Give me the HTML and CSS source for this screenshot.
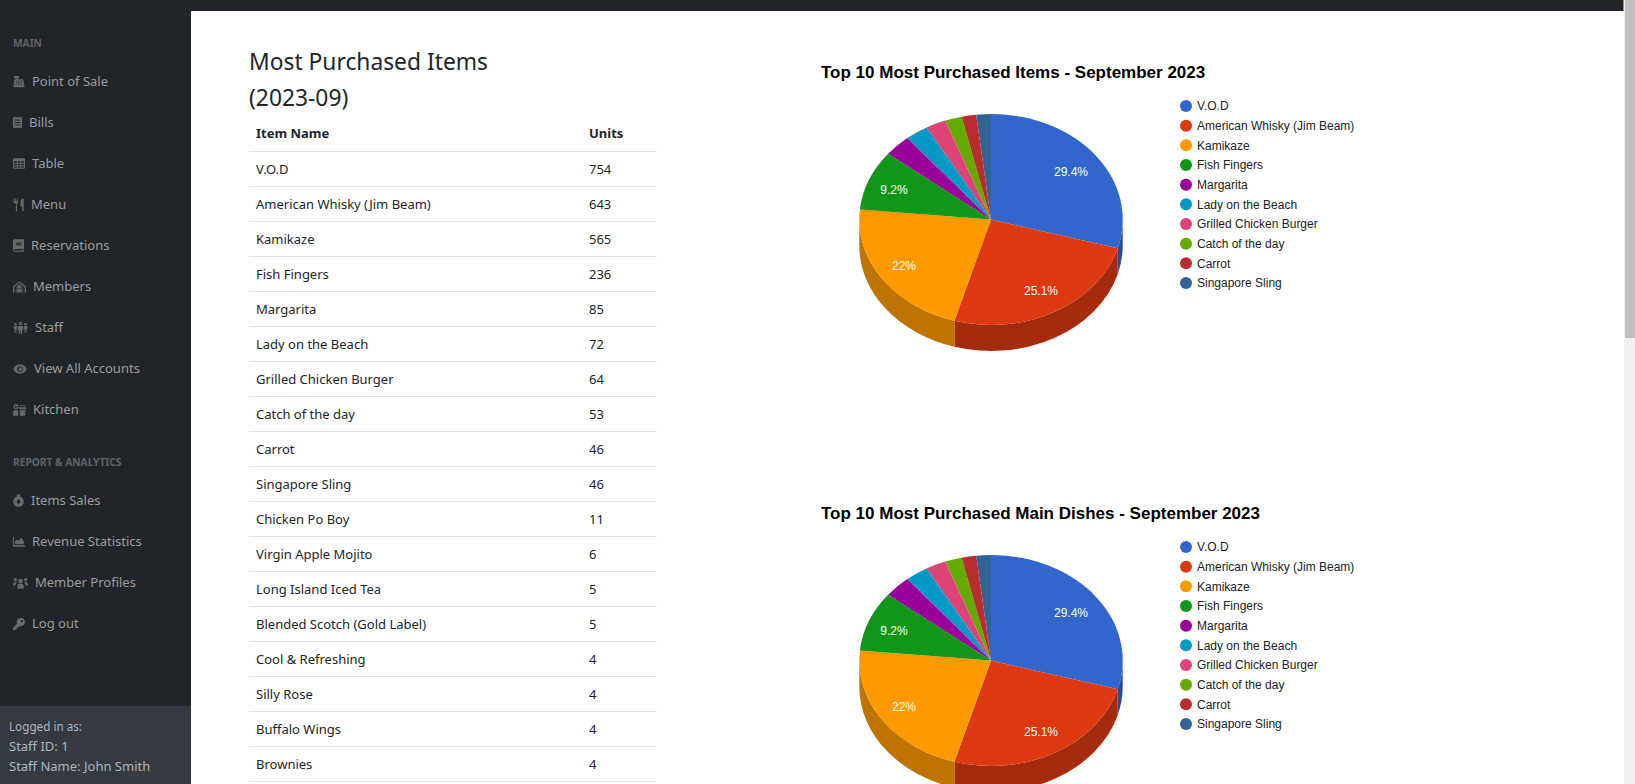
FILE: index.html
```html
<!DOCTYPE html>
<html lang="en">
<head>
    <meta charset="UTF-8">
    <title>Most Purchased Items</title>
    <link rel="stylesheet" href="styles.css">
</head>
<body>
    <!-- shared drawings -->
    <svg class="sprite" xmlns="http://www.w3.org/2000/svg">
        <symbol id="i-register" viewBox="0 0 512 512"><path fill-rule="evenodd" d="M56 24h184a16 16 0 0 1 16 16v72a16 16 0 0 1-16 16h-64v32h224a40 40 0 0 1 40 34l32 176v16H24v-16l32-176a40 40 0 0 1 40-34h32v-32H56a16 16 0 0 1-16-16V40a16 16 0 0 1 16-16zM136 216v40h48v-40zM232 216v40h48v-40zM328 216v40h48v-40zM136 288v40h48v-40zM232 288v40h48v-40zM328 288v40h48v-40z"/><path d="M24 392h464v64a40 40 0 0 1-40 40H64a40 40 0 0 1-40-40z"/></symbol>
        <symbol id="i-receipt" viewBox="0 0 384 512"><path fill-rule="evenodd" d="M0 8l48 32L96 8l48 32 48-32 48 32 48-32 48 32 48-32v496l-48-32-48 32-48-32-48 32-48-32-48 32-48-32-48 32zM72 128v44h240v-44zM72 234v44h240v-44zM72 340v44h240v-44z"/></symbol>
        <symbol id="i-table" viewBox="0 0 512 448"><path fill-rule="evenodd" d="M48 0h416a48 48 0 0 1 48 48v352a48 48 0 0 1-48 48H48a48 48 0 0 1-48-48V48A48 48 0 0 1 48 0zM48 112v84h112v-84zM200 112v84h112v-84zM352 112v84h112v-84zM48 236v76h112v-76zM200 236v76h112v-76zM352 236v76h112v-76zM48 352v50h112v-50zM200 352v50h112v-50zM352 352v50h112v-50z"/></symbol>
        <symbol id="i-utensils" viewBox="0 0 416 512"><path d="M16 16h28l8 120h20l8-120h32l8 120h20l8-120h28l16 150c2 30-20 54-48 62l12 268a28 28 0 0 1-56 0l12-268C44 220 20 196 0 166zM416 16v480a32 32 0 0 1-64 0V336h-64V120C288 60 340 16 416 16z"/></symbol>
        <symbol id="i-book" viewBox="0 0 448 512"><path fill-rule="evenodd" d="M72 0h352a24 24 0 0 1 24 24v344a24 24 0 0 1-18 23v57a24 24 0 0 1 18 24v16a24 24 0 0 1-24 24H72a72 72 0 0 1-72-72V72A72 72 0 0 1 72 0zM72 400a32 32 0 0 0 0 64h316v-64zM112 130v40h240v-40zM112 210v40h240v-40z"/></symbol>
        <symbol id="i-house" viewBox="0 0 576 512"><path fill-rule="evenodd" d="M288 0l272 210a20 20 0 0 1 16 20v260a22 22 0 0 1-22 22h-16a22 22 0 0 1-22-22V252L288 62 60 252v238a22 22 0 0 1-22 22H22a22 22 0 0 1-22-22V230a20 20 0 0 1 16-20z"/><path d="M288 100l170 140v272H118V240z" opacity=".45"/><circle cx="288" cy="240" r="70"/><path d="M170 470c0-80 54-124 118-124s118 44 118 124z"/></symbol>
        <symbol id="i-people" viewBox="0 0 640 512"><circle cx="320" cy="72" r="68"/><circle cx="104" cy="96" r="58"/><circle cx="536" cy="96" r="58"/><path d="M248 166h144a48 48 0 0 1 48 48v100l-48 60v112a28 28 0 0 1-56 0v-96h-32v96a28 28 0 0 1-56 0V374l-48-60V214a48 48 0 0 1 48-48zM44 170h122v130l-20 40v130h-30V370h-16v100H70V344L24 272v-66a36 36 0 0 1 20-36zM474 170h122a36 36 0 0 1 20 36v66l-46 72v126h-30V370h-16v100h-30V340l-20-40z"/></symbol>
        <symbol id="i-eye" viewBox="0 0 576 512"><path fill-rule="evenodd" d="M288 56c126 0 236 82 288 200-52 118-162 200-288 200S52 374 0 256C52 138 162 56 288 56zM288 136a120 120 0 1 0 0 240 120 120 0 0 0 0-240z"/><path d="M288 170a86 86 0 1 1-86 86c0-8 1-14 3-20a44 44 0 0 0 63-64c6-2 13-2 20-2z"/></symbol>
        <symbol id="i-kitchen" viewBox="0 0 576 512"><path fill-rule="evenodd" d="M128 0a112 112 0 1 1 0 224 112 112 0 0 1 0-224zM128 64a48 48 0 1 0 0 96 48 48 0 0 0 0-96z"/><path d="M300 50h260a16 16 0 0 1 0 32H300a16 16 0 0 1 0-32zM270 136h290a16 16 0 0 1 16 16v52a16 16 0 0 1-16 16H270zM16 272h224v24h-24v16a16 16 0 0 1 16 16v152a32 32 0 0 1-32 32H40a32 32 0 0 1-32-32V328a16 16 0 0 1 16-16v-16H16zM300 272h276v40h-36v168a32 32 0 0 1-32 32H336a32 32 0 0 1-32-32V312h-4z"/></symbol>
        <symbol id="i-fire" viewBox="0 0 448 512"><path d="M224 80a216 216 0 1 1 0 432 216 216 0 0 1 0-432z"/><path d="M150 8h148v90H150z"/><path d="M224 210c40 40 70 70 70 110a70 70 0 0 1-140 0c0-40 30-70 70-110z" fill="#212529"/></symbol>
        <symbol id="i-area" viewBox="0 0 512 448"><path d="M0 24h44v362h468v44a18 18 0 0 1-18 18H24a24 24 0 0 1-24-24z"/><path d="M84 344V216c0-8 4-14 10-18l84-48 60 40 100-108c10-8 24-6 30 4l96 134v124z"/></symbol>
        <symbol id="i-users" viewBox="0 0 640 512"><circle cx="320" cy="170" r="96"/><circle cx="100" cy="116" r="70"/><circle cx="540" cy="116" r="70"/><path d="M186 464v-60c0-80 50-130 110-130h48c60 0 110 50 110 130v60a32 32 0 0 1-32 32H218a32 32 0 0 1-32-32zM0 330c0-70 30-120 80-120h50c14 0 30 4 42 12-44 32-68 82-72 140H24a24 24 0 0 1-24-24zM640 330c0-70-30-120-80-120h-50c-14 0-30 4-42 12 44 32 68 82 72 140h76a24 24 0 0 0 24-24z"/></symbol>
        <symbol id="i-key" viewBox="0 0 512 512"><path fill-rule="evenodd" d="M336 0a176 176 0 1 1-50 345l-45 50h-49v56h-56v45a16 16 0 0 1-16 16H16a16 16 0 0 1-16-16v-72a24 24 0 0 1 7-17l165-165A176 176 0 0 1 336 0zM376 88a48 48 0 1 0 0 96 48 48 0 0 0 0-96z"/></symbol>

        <symbol id="pie-top10" viewBox="-140 -110 280 250" overflow="visible">
            <path fill="#264d99" d="M131.7 0v26A131.7 105.5 0 0 1 126.7 54.8V28.8A131.7 105.5 0 0 0 131.7 0z"/>
            <path fill="#a52b0e" d="M126.7 28.8v26A131.7 105.5 0 0 1 -36.6 127.3V101.3A131.7 105.5 0 0 0 126.7 28.8z"/>
            <path fill="#bf7300" d="M-36.6 101.3v26A131.7 105.5 0 0 1 -131.7 26V0A131.7 105.5 0 0 0 -36.6 101.3z"/>
            <path fill="#3366cc" d="M0 0V-105.5A131.7 105.5 0 0 1 126.7 28.8z"/>
            <path fill="#dc3912" d="M0 0L126.7 28.8A131.7 105.5 0 0 1 -36.6 101.3z"/>
            <path fill="#ff9900" d="M0 0L-36.6 101.3A131.7 105.5 0 0 1 -131.1 -10.1z"/>
            <path fill="#109618" d="M0 0L-131.1 -10.1A131.7 105.5 0 0 1 -102.9 -65.8z"/>
            <path fill="#990099" d="M0 0L-102.9 -65.8A131.7 105.5 0 0 1 -83.7 -81.5z"/>
            <path fill="#0099c6" d="M0 0L-83.7 -81.5A131.7 105.5 0 0 1 -64.5 -92z"/>
            <path fill="#dd4477" d="M0 0L-64.5 -92A131.7 105.5 0 0 1 -45.8 -98.9z"/>
            <path fill="#66aa00" d="M0 0L-45.8 -98.9A131.7 105.5 0 0 1 -29.4 -102.8z"/>
            <path fill="#b82e2e" d="M0 0L-29.4 -102.8A131.7 105.5 0 0 1 -14.8 -104.8z"/>
            <path fill="#316395" d="M0 0L-14.8 -104.8A131.7 105.5 0 0 1 0 -105.5z"/>
        </symbol>
    </svg>

    <div class="layout">
        <aside class="sidenav">
            <nav class="sidenav-menu">
                <div class="nav-heading">Main</div>
                <a class="nav-link" href="#"><svg width="12" height="13"><use href="#i-register"/></svg>Point of Sale</a>
                <a class="nav-link" href="#"><svg width="9" height="13"><use href="#i-receipt"/></svg>Bills</a>
                <a class="nav-link" href="#"><svg width="12" height="11"><use href="#i-table"/></svg>Table</a>
                <a class="nav-link" href="#"><svg width="11" height="13"><use href="#i-utensils"/></svg>Menu</a>
                <a class="nav-link" href="#"><svg width="11" height="13"><use href="#i-book"/></svg>Reservations</a>
                <a class="nav-link" href="#"><svg width="13" height="12"><use href="#i-house"/></svg>Members</a>
                <a class="nav-link" href="#"><svg width="15" height="12"><use href="#i-people"/></svg>Staff</a>
                <a class="nav-link" href="#"><svg width="14" height="12"><use href="#i-eye"/></svg>View All Accounts</a>
                <a class="nav-link" href="#"><svg width="13" height="12"><use href="#i-kitchen"/></svg>Kitchen</a>
                <div class="nav-heading">Report &amp; Analytics</div>
                <a class="nav-link" href="#"><svg width="11" height="13"><use href="#i-fire"/></svg>Items Sales</a>
                <a class="nav-link" href="#"><svg width="12" height="11"><use href="#i-area"/></svg>Revenue Statistics</a>
                <a class="nav-link" href="#"><svg width="15" height="12"><use href="#i-users"/></svg>Member Profiles</a>
                <a class="nav-link" href="#"><svg width="12" height="12"><use href="#i-key"/></svg>Log out</a>
            </nav>
            <div class="sidenav-footer">
                <div class="small">Logged in as:</div>
                <div>Staff ID: 1</div>
                <div>Staff Name: John Smith</div>
            </div>
        </aside>

        <div class="page">
            <div class="topbar"></div>
            <main class="content">
                <section class="items">
                    <h4>Most Purchased Items<br>(2023-09)</h4>
                    <table class="items-table">
                        <thead>
                            <tr><th>Item Name</th><th>Units</th></tr>
                        </thead>
                        <tbody>
                            <tr><td>V.O.D</td><td>754</td></tr>
                            <tr><td>American Whisky (Jim Beam)</td><td>643</td></tr>
                            <tr><td>Kamikaze</td><td>565</td></tr>
                            <tr><td>Fish Fingers</td><td>236</td></tr>
                            <tr><td>Margarita</td><td>85</td></tr>
                            <tr><td>Lady on the Beach</td><td>72</td></tr>
                            <tr><td>Grilled Chicken Burger</td><td>64</td></tr>
                            <tr><td>Catch of the day</td><td>53</td></tr>
                            <tr><td>Carrot</td><td>46</td></tr>
                            <tr><td>Singapore Sling</td><td>46</td></tr>
                            <tr><td>Chicken Po Boy</td><td>11</td></tr>
                            <tr><td>Virgin Apple Mojito</td><td>6</td></tr>
                            <tr><td>Long Island Iced Tea</td><td>5</td></tr>
                            <tr><td>Blended Scotch (Gold Label)</td><td>5</td></tr>
                            <tr><td>Cool &amp; Refreshing</td><td>4</td></tr>
                            <tr><td>Silly Rose</td><td>4</td></tr>
                            <tr><td>Buffalo Wings</td><td>4</td></tr>
                            <tr><td>Brownies</td><td>4</td></tr>
                        </tbody>
                    </table>
                </section>

                <section class="charts">
                    <svg class="chart" width="600" height="441">
                        <text class="chart-title" x="0" y="28">Top 10 Most Purchased Items - September 2023</text>
                        <use href="#pie-top10" x="30" y="59.5" width="280" height="250"/>
                        <text class="pie-label" x="250" y="126">29.4%</text>
                        <text class="pie-label" x="220" y="245">25.1%</text>
                        <text class="pie-label" x="83" y="220">22%</text>
                        <text class="pie-label" x="73" y="144">9.2%</text>
                        <g class="legend">
                            <circle cx="365" cy="56" r="6" fill="#3366cc"/><text x="376" y="60.2">V.O.D</text>
                            <circle cx="365" cy="75.7" r="6" fill="#dc3912"/><text x="376" y="79.9">American Whisky (Jim Beam)</text>
                            <circle cx="365" cy="95.3" r="6" fill="#ff9900"/><text x="376" y="99.5">Kamikaze</text>
                            <circle cx="365" cy="115" r="6" fill="#109618"/><text x="376" y="119.2">Fish Fingers</text>
                            <circle cx="365" cy="134.7" r="6" fill="#990099"/><text x="376" y="138.9">Margarita</text>
                            <circle cx="365" cy="154.3" r="6" fill="#0099c6"/><text x="376" y="158.5">Lady on the Beach</text>
                            <circle cx="365" cy="174" r="6" fill="#dd4477"/><text x="376" y="178.2">Grilled Chicken Burger</text>
                            <circle cx="365" cy="193.7" r="6" fill="#66aa00"/><text x="376" y="197.9">Catch of the day</text>
                            <circle cx="365" cy="213.3" r="6" fill="#b82e2e"/><text x="376" y="217.5">Carrot</text>
                            <circle cx="365" cy="233" r="6" fill="#316395"/><text x="376" y="237.2">Singapore Sling</text>
                        </g>
                    </svg>
                    <svg class="chart" width="600" height="441">
                        <text class="chart-title" x="0" y="28">Top 10 Most Purchased Main Dishes - September 2023</text>
                        <use href="#pie-top10" x="30" y="59.5" width="280" height="250"/>
                        <text class="pie-label" x="250" y="126">29.4%</text>
                        <text class="pie-label" x="220" y="245">25.1%</text>
                        <text class="pie-label" x="83" y="220">22%</text>
                        <text class="pie-label" x="73" y="144">9.2%</text>
                        <g class="legend">
                            <circle cx="365" cy="56" r="6" fill="#3366cc"/><text x="376" y="60.2">V.O.D</text>
                            <circle cx="365" cy="75.7" r="6" fill="#dc3912"/><text x="376" y="79.9">American Whisky (Jim Beam)</text>
                            <circle cx="365" cy="95.3" r="6" fill="#ff9900"/><text x="376" y="99.5">Kamikaze</text>
                            <circle cx="365" cy="115" r="6" fill="#109618"/><text x="376" y="119.2">Fish Fingers</text>
                            <circle cx="365" cy="134.7" r="6" fill="#990099"/><text x="376" y="138.9">Margarita</text>
                            <circle cx="365" cy="154.3" r="6" fill="#0099c6"/><text x="376" y="158.5">Lady on the Beach</text>
                            <circle cx="365" cy="174" r="6" fill="#dd4477"/><text x="376" y="178.2">Grilled Chicken Burger</text>
                            <circle cx="365" cy="193.7" r="6" fill="#66aa00"/><text x="376" y="197.9">Catch of the day</text>
                            <circle cx="365" cy="213.3" r="6" fill="#b82e2e"/><text x="376" y="217.5">Carrot</text>
                            <circle cx="365" cy="233" r="6" fill="#316395"/><text x="376" y="237.2">Singapore Sling</text>
                        </g>
                    </svg>
                </section>
            </main>
        </div>

        <div class="scrollbar"><div class="scrollbar-thumb"></div></div>
    </div>
</body>
</html>
```

FILE: styles.css
```css
html, body { height: 100%; margin: 0; overflow: hidden; }
body { font-family: "Noto Sans", "Open Sans", sans-serif; font-size: 13px; line-height: 21px; color: #212529; background: #fff; }
.sprite { display: none; }

.layout { display: flex; height: 784px; }

/* sidebar */
.sidenav { width: 191px; flex: none; display: flex; flex-direction: column; background: #212529; }
.sidenav-menu { flex: 1; padding-top: 11px; }
.nav-heading { padding: 23px 13px 9px; font-size: 10.2px; line-height: 18px; font-weight: 700; text-transform: uppercase; color: #5f6366; }
.nav-link { display: flex; align-items: center; gap: 7px; height: 41px; padding-left: 13px; color: #9a9c9e; text-decoration: none; }
.nav-link svg { flex: none; fill: #66696c; }
.sidenav-footer { height: 78px; box-sizing: border-box; padding: 11px 9px 0; background: #343a40; color: #adb5bd; line-height: 20px; }
.sidenav-footer .small { font-size: 11.7px; line-height: 19px; }

/* main area */
.page { flex: 1; min-width: 0; display: flex; flex-direction: column; }
.topbar { height: 11px; flex: none; background: #212529; border-right: 1px solid #8a8d90; }
.content { flex: 1; min-height: 0; overflow: hidden; display: flex; padding: 33px 0 0 58px; }

.items { width: 408px; flex: none; }
.items h4 { margin: 0; font-size: 22.8px; line-height: 36px; font-weight: 400; }
.items-table { width: 100%; border-collapse: collapse; }
.items-table tr { height: 35px; }
.items-table th, .items-table td { padding: 1px 7px 0; text-align: left; border-bottom: 1px solid #dee2e6; }
.items-table th { font-weight: 700; }
.items-table th:first-child, .items-table td:first-child { width: 319px; }

/* charts */
.charts { margin: 6px 0 0 164px; display: flex; flex-direction: column; }
.chart { display: block; flex: none; font-family: "Liberation Sans", Arial, sans-serif; }
.chart-title { font-size: 17px; font-weight: 700; fill: #000; }
.pie-label { font-size: 12px; fill: #fff; text-anchor: middle; }
.legend { font-size: 12px; fill: #222; }

/* page scrollbar */
.scrollbar { width: 11px; flex: none; background: #f1f1f1; }
.scrollbar-thumb { height: 338px; margin-left: 1px; background: #c1c1c1; }
```
